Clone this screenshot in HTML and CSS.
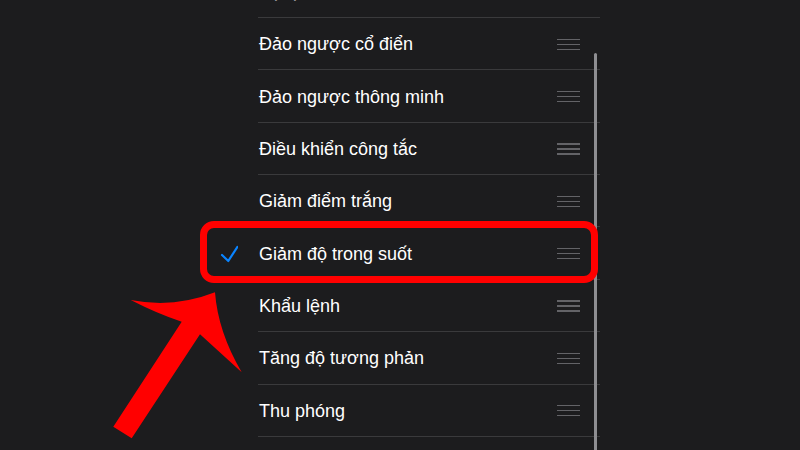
FILE: index.html
```html
<!DOCTYPE html>
<html lang="vi">
<head>
<meta charset="utf-8">
<title>Phím tắt trợ năng</title>
<link rel="stylesheet" href="styles.css">
</head>
<body>
<div class="screen">
  <ul class="list">
    <li class="row"><span class="check"></span><div class="cell"><span class="label">Bộ lọc màu</span><span class="handle"><i></i><i></i><i></i></span></div></li>
    <li class="row"><span class="check"></span><div class="cell"><span class="label">Đảo ngược cổ điển</span><span class="handle"><i></i><i></i><i></i></span></div></li>
    <li class="row"><span class="check"></span><div class="cell"><span class="label">Đảo ngược thông minh</span><span class="handle"><i></i><i></i><i></i></span></div></li>
    <li class="row"><span class="check"></span><div class="cell"><span class="label">Điều khiển công tắc</span><span class="handle"><i></i><i></i><i></i></span></div></li>
    <li class="row"><span class="check"></span><div class="cell"><span class="label">Giảm điểm trắng</span><span class="handle"><i></i><i></i><i></i></span></div></li>
    <li class="row"><span class="check"><svg class="tick" width="18" height="18" viewBox="0 0 18 18"><path d="M2 10 L8.3 16 L17.3 2" fill="none" stroke="#0a84ff" stroke-width="2.2" stroke-linecap="round" stroke-linejoin="round"/></svg></span><div class="cell"><span class="label">Giảm độ trong suốt</span><span class="handle"><i></i><i></i><i></i></span></div></li>
    <li class="row"><span class="check"></span><div class="cell"><span class="label">Khẩu lệnh</span><span class="handle"><i></i><i></i><i></i></span></div></li>
    <li class="row"><span class="check"></span><div class="cell"><span class="label">Tăng độ tương phản</span><span class="handle"><i></i><i></i><i></i></span></div></li>
    <li class="row"><span class="check"></span><div class="cell"><span class="label">Thu phóng</span><span class="handle"><i></i><i></i><i></i></span></div></li>
    <li class="row"><span class="check"></span><div class="cell cell-empty"></div></li>
  </ul>
  <div class="scrollbar"></div>
  <div class="highlight"></div>
  <svg class="arrow" width="800" height="450" viewBox="0 0 800 450">
    <path d="M130.7 300 Q174 308.4 215 292.3 Q218 332 241.7 372.3 L200 334.3 L131.7 438.3 L113.3 426.7 L181.7 321.7 Q158 314 130.7 300 Z" fill="#ff0000"/>
  </svg>
</div>
</body>
</html>
```
FILE: styles.css
```css
html, body {
  margin: 0;
  padding: 0;
  background: #1c1c1e;
}
.screen {
  position: relative;
  width: 800px;
  height: 450px;
  overflow: hidden;
  background: #1c1c1e;
  font-family: "Liberation Sans", Arial, sans-serif;
  color: #ffffff;
}
.list {
  list-style: none;
  margin: -34.4px 0 0 200px;
  padding: 0;
  width: 400px;
  display: flex;
  flex-direction: column;
}
.row {
  display: flex;
  height: 52.375px;
}
.check {
  width: 58px;
  flex: none;
  display: flex;
  align-items: center;
}
.tick {
  margin-left: 20px;
  margin-top: 1px;
}
.cell {
  flex: 1;
  display: flex;
  align-items: center;
  justify-content: space-between;
  padding-right: 20px;
  border-bottom: 1px solid #3a3a3c;
  box-sizing: border-box;
}
.label {
  font-size: 18px;
  line-height: 22px;
  margin-left: 1px;
  margin-top: 1px;
}
.handle {
  width: 23px;
  display: flex;
  flex-direction: column;
  gap: 3.7px;
  margin-top: 1px;
}
.handle i {
  display: block;
  height: 1.3px;
  background: #636367;
}
.scrollbar {
  position: absolute;
  left: 594px;
  top: 53px;
  width: 3px;
  height: 420px;
  border-radius: 2px;
  background: #8e8e92;
}
.highlight {
  position: absolute;
  left: 200px;
  top: 221px;
  width: 398px;
  height: 62px;
  box-sizing: border-box;
  border: 7px solid #ff0000;
  border-radius: 14px;
}
.arrow {
  position: absolute;
  left: 0;
  top: 0;
}
```
